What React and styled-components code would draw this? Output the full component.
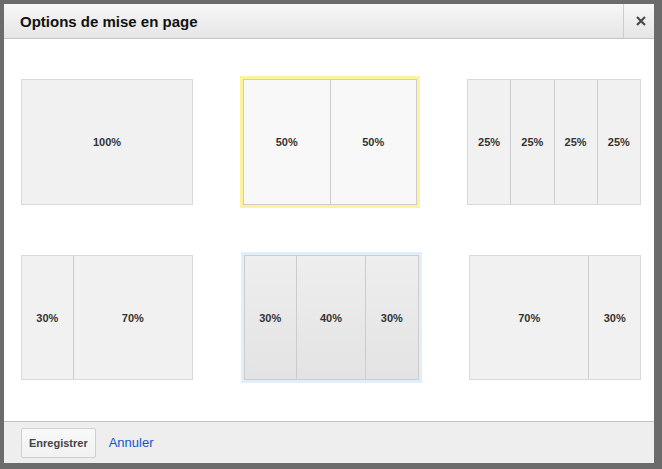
import React from "react";
import styled, { createGlobalStyle } from "styled-components";

const Global = createGlobalStyle`
  html, body { margin: 0; padding: 0; background: #6b6b6b; }
  body { font-family: Arial, "Liberation Sans", sans-serif; }
`;

const Dialog = styled.div`
  box-sizing: border-box;
  width: 650px;
  height: 459px;
  margin: 4px 0 0 4px;
  background: #fff;
  display: flex;
  flex-direction: column;
`;

const Header = styled.div`
  box-sizing: border-box;
  height: 35px;
  display: flex;
  align-items: stretch;
  background: linear-gradient(#f7f7f7, #e6e6e6);
  border-bottom: 1px solid #c4c4c4;
`;

const Title = styled.h1`
  flex: 1;
  margin: 0;
  padding-left: 16px;
  display: flex;
  align-items: center;
  font-size: 15px;
  font-weight: bold;
  color: #111;
`;

const Close = styled.button`
  width: 31px;
  border: 0;
  border-left: 1px solid #cdcdcd;
  background: transparent;
  padding: 0 0 0 3px;
  display: flex;
  align-items: center;
  justify-content: center;
  cursor: pointer;
`;

const Body = styled.div`
  flex: 1;
  padding: 40px 13px 0 17px;
  display: flex;
  flex-direction: column;
  gap: 50px;
`;

const Row = styled.div`
  display: flex;
  justify-content: space-between;
  height: ${(p) => p.h}px;
`;

const Card = styled.div`
  box-sizing: border-box;
  width: ${(p) => p.w}px;
  height: 100%;
  display: flex;
  border: 1px solid ${(p) => (p.variant === "plain" ? "#d9d9d9" : "#cccccc")};
  background: ${(p) =>
    p.variant === "selected"
      ? "#f8f8f8"
      : p.variant === "hover"
      ? "linear-gradient(#eeeeee, #e3e3e3)"
      : "#f1f1f1"};
  box-shadow: ${(p) =>
    p.variant === "selected"
      ? "0 0 0 3px #fdf29e"
      : p.variant === "hover"
      ? "0 0 0 3px #e1eefb"
      : "none"};
`;

const Col = styled.div`
  flex: ${(p) => p.pct};
  display: flex;
  align-items: center;
  justify-content: center;
  font-size: 11px;
  font-weight: bold;
  color: #333;
  & + & {
    border-left: 1px solid ${(p) => (p.dark ? "#cccccc" : "#d9d9d9")};
  }
`;

const Footer = styled.div`
  box-sizing: border-box;
  height: 42px;
  border-top: 1px solid #c2c2c2;
  background: #eeeeee;
  display: flex;
  align-items: flex-start;
  padding: 6px 0 0 17px;
  gap: 13px;
`;

const SaveButton = styled.button`
  height: 30px;
  padding: 0 7px;
  border: 1px solid #cfcfcf;
  border-radius: 2px;
  background: linear-gradient(#f9f9f9, #f1f1f1);
  font-family: Arial, "Liberation Sans", sans-serif;
  font-size: 11px;
  font-weight: bold;
  color: #444;
`;

const CancelLink = styled.a`
  line-height: 30px;
  font-size: 13px;
  color: #1155cc;
  text-decoration: none;
  cursor: pointer;
`;

const layouts = [
  [
    { w: 172, variant: "plain", cols: [100] },
    { w: 174, variant: "selected", cols: [50, 50] },
    { w: 174, variant: "plain", cols: [25, 25, 25, 25] },
  ],
  [
    { w: 172, variant: "plain", cols: [30, 70] },
    { w: 175, variant: "hover", cols: [30, 40, 30] },
    { w: 172, variant: "plain", cols: [70, 30] },
  ],
];

export default function App() {
  return (
    <>
      <Global />
      <Dialog>
        <Header>
          <Title>Options de mise en page</Title>
          <Close aria-label="Fermer">
            <svg width="10" height="10" viewBox="0 0 10 10">
              <path d="M1 1L9 9M9 1L1 9" stroke="#4a4a4a" strokeWidth="2.2" />
            </svg>
          </Close>
        </Header>
        <Body>
          {layouts.map((row, i) => (
            <Row key={i} h={i === 0 ? 126 : 125}>
              {row.map((card, j) => (
                <Card key={j} w={card.w} variant={card.variant}>
                  {card.cols.map((c, k) => (
                    <Col key={k} pct={c} dark={card.variant !== "plain"}>
                      {c}%
                    </Col>
                  ))}
                </Card>
              ))}
            </Row>
          ))}
        </Body>
        <Footer>
          <SaveButton>Enregistrer</SaveButton>
          <CancelLink>Annuler</CancelLink>
        </Footer>
      </Dialog>
    </>
  );
}
